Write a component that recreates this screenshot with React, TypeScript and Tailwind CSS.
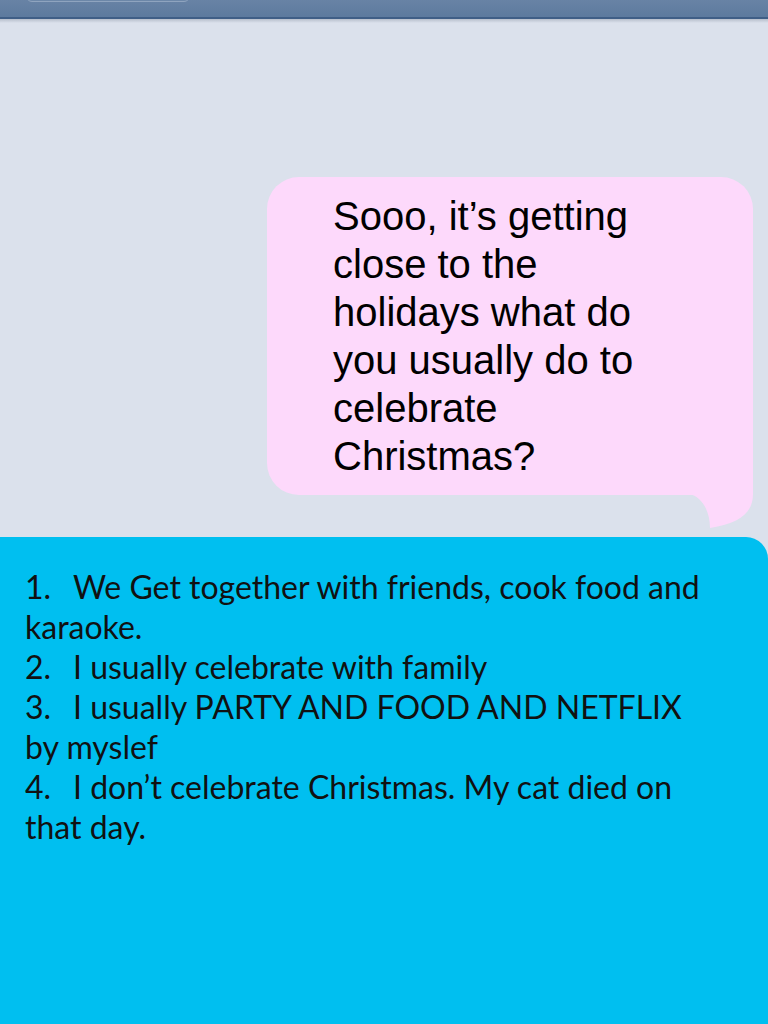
import React from "react";

const answers = [
    "We Get together with friends, cook food and karaoke.",
    "I usually celebrate with family",
    "I usually PARTY AND FOOD AND NETFLIX by myslef",
    "I don’t celebrate Christmas. My cat died on that day.",
];

function BubbleTail() {
    return (
        <svg className="absolute right-0 top-full -mt-px" width="64" height="36" viewBox="0 0 64 36">
            <path
                d="M0 0 L64 0 C64 18 52 29 21 34 C21 16 12 2 0 0 Z"
                fill="#fdd9fb"
            />
        </svg>
    );
}

export default function App() {
    return (
        <div className="w-[768px] h-[1024px] flex flex-col bg-[#dbe1ec] overflow-hidden">
            {/* Top bar */}
            <div className="relative h-[17px] bg-gradient-to-b from-[#6883a5] to-[#5d7a9e]">
                <div className="absolute left-[26px] top-[-10px] w-[164px] h-[12px] rounded-full border border-[#8fa4bf] bg-[#6c87a8]" />
            </div>
            <div className="h-[2px] bg-[#3f5e86]" />
            <div className="h-[4px] bg-gradient-to-b from-[#b7bfcc] to-[#dbe1ec]" />

            {/* Sent message */}
            <div className="flex justify-end pt-[154px] pr-[15px]">
                <div className="relative w-[486px] h-[318px] rounded-[32px] rounded-br-none bg-[#fdd9fb] pl-[66px] pt-[15px]">
                    <p className="w-[310px] text-[40px] leading-[48px] text-black font-['Liberation_Sans',Arial,sans-serif]">
                        Sooo, it’s getting close to the holidays what do you usually do to celebrate Christmas?
                    </p>
                    <BubbleTail />
                </div>
            </div>

            {/* Answers panel */}
            <div className="mt-[42px] flex-1 bg-[#00bff0] rounded-tr-[22px] pl-[25px] pr-[53px] pt-[30px]">
                <ol className="text-[32px] leading-[40px] text-[#111] font-['Lato',sans-serif]">
                    {answers.map((a, i) => (
                        <li key={i}>
                            <span className="inline-block w-[48px]">{i + 1}.</span>
                            {a}
                        </li>
                    ))}
                </ol>
            </div>
        </div>
    );
}
